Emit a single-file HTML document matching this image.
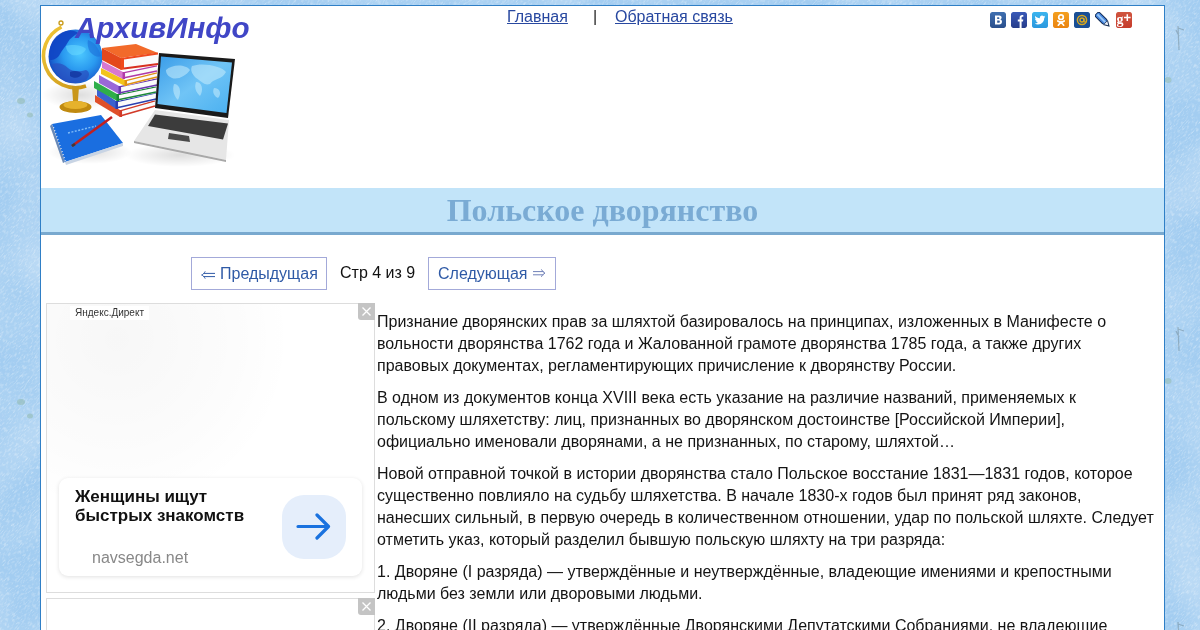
<!DOCTYPE html>
<html><head><meta charset="utf-8">
<style>
*{margin:0;padding:0;box-sizing:border-box}
html,body{width:1200px;height:630px;overflow:hidden}
body{background:#a3cdf1;font-family:"Liberation Sans",sans-serif;font-size:16px;color:#222;position:relative}
.abs{position:absolute}
#wrap{will-change:transform;position:absolute;left:40px;top:5px;width:1125px;height:700px;background:#fff;border:1px solid #2f7fc6}
#logo{position:absolute;left:0;top:0;width:200px;height:165px}
#logotitle{will-change:transform;position:absolute;left:75px;top:11px;font:italic bold 29.6px "Liberation Sans",sans-serif;color:#4046c6;white-space:nowrap}
.nav{position:absolute;top:2px;color:#2848a0;text-decoration:underline;white-space:nowrap}
#soc{position:absolute;left:949px;top:6px}
.ic{position:absolute;top:0;width:16px;height:16px;border-radius:2px}
#band{position:absolute;left:0;top:182px;width:1123px;height:47px;background:#c2e4f9;border-bottom:3px solid #79a9cf}
#band h1{position:absolute;left:0;right:0;top:4px;text-align:center;font:bold 32px "Liberation Serif",serif;color:#7aabd4}
.pbtn{position:absolute;top:251px;height:33px;border:1px solid #a3a9d9;color:#2f5aa6;line-height:31px;white-space:nowrap}
#pinfo{position:absolute;left:299px;top:251px;line-height:31px;color:#111}
.ad{position:absolute;left:5px;width:329px;border:1px solid #ddd;background:#fff}
.x{position:absolute;right:-1px;top:-1px;width:17px;height:17px;background:#c4c4c4;border-bottom-left-radius:3px}
.x svg{display:block}
.glow{position:absolute;left:0;top:0;width:327px;height:288px;background:radial-gradient(circle 175px at 70px 35px,rgba(0,0,0,0.03),rgba(0,0,0,0.012) 70%,rgba(0,0,0,0) 100%)}
.ylab{position:absolute;left:23px;top:2px;padding:0 5px;background:#fff;font-size:10px;line-height:14px;color:#333}
.card{position:absolute;left:12px;top:174px;width:303px;height:98px;background:#fff;border-radius:9px;box-shadow:0 1px 4px rgba(0,0,0,0.12)}
.ctitle{position:absolute;left:16px;top:9px;font-weight:bold;font-size:17px;line-height:19px;color:#111}
.cdom{position:absolute;left:33px;top:71px;font-size:16px;line-height:18px;color:#888}
.cbtn{position:absolute;left:223px;top:17px;width:64px;height:64px;background:#e5eefb;border-radius:22px}
.cbtn svg{display:block}
#txt{position:absolute;left:336px;top:305px;width:779px;color:#141414;line-height:22px}
#txt p{margin-bottom:10px}
</style></head><body>
<svg class="abs" style="left:0;top:0" width="1200" height="630">
<defs><filter id="nz" x="0" y="0" width="100%" height="100%"><feTurbulence type="fractalNoise" baseFrequency="0.9 0.25" numOctaves="2" seed="3"/><feColorMatrix type="matrix" values="0 0 0 0 1  0 0 0 0 1  0 0 0 0 1  0 0 0 1.6 -0.75"/></filter>
<filter id="nz2" x="0" y="0" width="100%" height="100%"><feTurbulence type="fractalNoise" baseFrequency="0.012" numOctaves="2" seed="7"/><feColorMatrix type="matrix" values="0 0 0 0 1  0 0 0 0 1  0 0 0 0 1  0 0 0 1.2 -0.45"/></filter></defs>
<rect width="1200" height="630" filter="url(#nz2)" opacity="0.5"/>
<g transform="rotate(40 600 315)"><rect x="-400" y="-600" width="2000" height="1830" filter="url(#nz)" opacity="0.65"/></g>
<g fill="#90b8a8" opacity="0.5"><ellipse cx="21" cy="101" rx="4" ry="3"/><ellipse cx="30" cy="115" rx="3" ry="2.5"/><ellipse cx="21" cy="402" rx="4" ry="3"/><ellipse cx="30" cy="416" rx="3" ry="2.5"/>
<ellipse cx="1168" cy="80" rx="3.5" ry="3"/><ellipse cx="1168" cy="381" rx="3.5" ry="3"/></g>
<g stroke="#6f8894" stroke-width="1.2" fill="none" opacity="0.5"><path d="M1178 26 L1179 50 M1178 28 L1184 30 M1179 36 L1176 30"/><path d="M1178 327 L1179 351 M1178 329 L1184 331 M1179 337 L1176 331"/><path d="M1178 622 L1179 640 M1178 624 L1184 626"/></g>
</svg>
<div id="wrap">

  <a class="nav" style="left:466px">Главная</a>
  <span class="nav" style="left:552px;text-decoration:none;color:#222">|</span>
  <a class="nav" style="left:574px">Обратная связь</a>
  <div id="soc">
    <svg class="ic" style="left:0" width="16" height="16" viewBox="0 0 16 16"><defs><linearGradient id="vk" x1="0" y1="0" x2="0" y2="1"><stop offset="0" stop-color="#3f6fb0"/><stop offset="1" stop-color="#2a4f8c"/></linearGradient></defs><rect width="16" height="16" rx="2" fill="url(#vk)"/><path d="M5 3.5 H9.2 C11 3.5 11.6 4.5 11.6 5.6 C11.6 6.6 11 7.2 10.4 7.5 C11.4 7.8 12 8.6 12 9.7 C12 11.3 11 12.5 9.2 12.5 H5 Z M7.2 5.3 V7 H8.6 C9.1 7 9.4 6.7 9.4 6.15 C9.4 5.6 9.1 5.3 8.6 5.3 Z M7.2 8.6 V10.7 H8.8 C9.4 10.7 9.8 10.3 9.8 9.65 C9.8 9 9.4 8.6 8.8 8.6 Z" fill="#fff"/></svg>
    <svg class="ic" style="left:21px" width="16" height="16" viewBox="0 0 16 16"><defs><linearGradient id="fb" x1="0" y1="0" x2="0" y2="1"><stop offset="0" stop-color="#3a5ab8"/><stop offset="1" stop-color="#263c8a"/></linearGradient></defs><rect width="16" height="16" rx="2" fill="url(#fb)"/><path d="M8.6 16 V9.6 H6.8 V7.6 H8.6 V5.8 C8.6 4 9.6 3 11.3 3 C11.9 3 12.3 3.05 12.3 3.05 V4.8 H11.5 C10.8 4.8 10.6 5.2 10.6 5.8 V7.6 H12.3 L12 9.6 H10.6 V16 Z" fill="#fff"/></svg>
    <svg class="ic" style="left:42px" width="16" height="16" viewBox="0 0 16 16"><defs><linearGradient id="tw" x1="0" y1="0" x2="0" y2="1"><stop offset="0" stop-color="#3cb4ee"/><stop offset="1" stop-color="#2a98de"/></linearGradient></defs><rect width="16" height="16" rx="1.5" fill="url(#tw)"/><path d="M13.2 4.6 C12.8 4.8 12.4 4.9 12 4.95 C12.4 4.7 12.8 4.3 12.9 3.8 C12.5 4 12 4.2 11.6 4.3 C11.2 3.9 10.6 3.6 10 3.6 C8.8 3.6 7.8 4.6 7.8 5.8 C7.8 6 7.8 6.15 7.85 6.3 C6 6.2 4.4 5.3 3.3 4 C3.1 4.3 3 4.7 3 5.1 C3 5.9 3.4 6.5 4 6.9 C3.6 6.9 3.3 6.8 3 6.6 C3 7.7 3.8 8.6 4.8 8.8 C4.5 8.9 4.1 8.9 3.8 8.85 C4.1 9.7 4.9 10.4 5.9 10.4 C5.1 11 4.1 11.4 3.1 11.4 C2.9 11.4 2.8 11.4 2.6 11.4 C3.6 12 4.8 12.4 6 12.4 C10 12.4 12.2 9.1 12.2 6.2 V5.9 C12.6 5.6 13 5.2 13.2 4.6 Z" fill="#fff"/></svg>
    <svg class="ic" style="left:63px" width="16" height="16" viewBox="0 0 16 16"><defs><linearGradient id="ok" x1="0" y1="0" x2="0" y2="1"><stop offset="0" stop-color="#f4a020"/><stop offset="1" stop-color="#ea8410"/></linearGradient></defs><rect width="16" height="16" rx="1.5" fill="url(#ok)"/><circle cx="8" cy="5.2" r="2.3" fill="none" stroke="#fff" stroke-width="1.7"/><path d="M4.8 9 C6.8 10.3 9.2 10.3 11.2 9" fill="none" stroke="#fff" stroke-width="1.7" stroke-linecap="round"/><path d="M8 10 L5.3 13.2 M8 10 L10.7 13.2" stroke="#fff" stroke-width="1.7" stroke-linecap="round"/></svg>
    <svg class="ic" style="left:84px" width="16" height="16" viewBox="0 0 16 16"><rect width="16" height="16" rx="1.5" fill="#1a4f95"/><circle cx="8" cy="8" r="4.6" fill="none" stroke="#d8a820" stroke-width="1.5"/><circle cx="8" cy="8" r="2" fill="#1a4f95" stroke="#d8a820" stroke-width="1.4"/><path d="M10 6.5 V9.2 C10 10.4 11.6 10.6 12.3 9.5" fill="none" stroke="#d8a820" stroke-width="1.2"/></svg>
    <svg class="ic" style="left:105px" width="16" height="16" viewBox="0 0 16 16"><g transform="rotate(-45 8 8)"><rect x="4.6" y="-1.5" width="6.8" height="13.5" rx="2.2" fill="#132c54"/><rect x="5.6" y="-0.6" width="4.8" height="12" rx="1.2" fill="#4a88e0"/><rect x="7.2" y="0" width="1.8" height="11" fill="#9ccaf6"/><path d="M4.6 11.5 L11.4 11.5 L8 17.5 Z" fill="#132c54"/><path d="M5.8 11.8 L10.2 11.8 L8 15.4 Z" fill="#eef2fa"/></g></svg>
    <svg class="ic" style="left:126px" width="16" height="16" viewBox="0 0 16 16"><defs><linearGradient id="gp" x1="0" y1="0" x2="0" y2="1"><stop offset="0" stop-color="#d05640"/><stop offset="1" stop-color="#c63a2a"/></linearGradient></defs><rect width="16" height="16" rx="1.5" fill="url(#gp)"/><text x="0.6" y="11.8" font-family="Liberation Serif" font-size="14" font-weight="bold" fill="#fff">g</text><path d="M11.3 2.3 V9 M8 5.6 H14.6" stroke="#fff" stroke-width="1.5"/></svg>
  </div>
  <div id="band"><h1>Польское дворянство</h1></div>
  <div class="pbtn" style="left:150px;width:136px"><svg class="abs" style="left:9px;top:13px" width="15" height="9" viewBox="0 0 15 9"><path d="M14 2.4 H2.5 M14 5.6 H2.5 M4.2 0.4 C3.4 2 2.2 3.4 0.6 4 C2.2 4.6 3.4 6 4.2 7.6" fill="none" stroke="#2f5aa6" stroke-width="1"/></svg><span class="abs" style="left:28px;top:0">Предыдущая</span></div>
  <div id="pinfo">Стр 4 из 9</div>
  <div class="pbtn" style="left:387px;width:128px"><span class="abs" style="left:9px;top:0">Следующая</span><svg class="abs" style="left:104px;top:11px" width="13" height="9" viewBox="0 0 13 9"><path d="M0 2.6 H10.5 M0 5.8 H10.5 M8.4 0.4 C9.2 2 10.4 3.4 12 4.2 C10.4 4.8 9.2 6.2 8.4 7.8" fill="none" stroke="#7080b8" stroke-width="1"/></svg></div>

  <div class="ad" style="top:297px;height:290px">
    <div class="glow"></div>
    <div class="ylab">Яндекс.Директ</div>
    <div class="card">
      <div class="ctitle">Женщины ищут<br>быстрых знакомств</div>
      <div class="cdom">navsegda.net</div>
      <div class="cbtn"><svg width="64" height="64" viewBox="0 0 64 64"><path d="M16 31.5 H46 M35 20 L46.5 31.5 L35 43" fill="none" stroke="#1a72df" stroke-width="3.2" stroke-linecap="round" stroke-linejoin="round"/></svg></div>
    </div>
    <div class="x"><svg width="17" height="17" viewBox="0 0 17 17"><path d="M4.5 4.5 L12.5 12.5 M12.5 4.5 L4.5 12.5" stroke="#fff" stroke-width="1.3"/></svg></div>
  </div>
  <div class="ad" style="top:592px;height:100px">
    <div class="x"><svg width="17" height="17" viewBox="0 0 17 17"><path d="M4.5 4.5 L12.5 12.5 M12.5 4.5 L4.5 12.5" stroke="#fff" stroke-width="1.3"/></svg></div>
  </div>

  <div id="txt">
    <p>Признание дворянских прав за шляхтой базировалось на принципах, изложенных в Манифесте о вольности дворянства 1762 года и Жалованной грамоте дворянства 1785 года, а также других правовых документах, регламентирующих причисление к дворянству России.</p>
    <p>В одном из документов конца XVIII века есть указание на различие названий, применяемых к польскому шляхетству: лиц, признанных во дворянском достоинстве [Российской Империи], официально именовали дворянами, а не признанных, по старому, шляхтой…</p>
    <p>Новой отправной точкой в истории дворянства стало Польское восстание 1831—1831 годов, которое существенно повлияло на судьбу шляхетства. В начале 1830-х годов был принят ряд законов, нанесших сильный, в первую очередь в количественном отношении, удар по польской шляхте. Следует отметить указ, который разделил бывшую польскую шляхту на три разряда:</p>
    <p>1. Дворяне (I разряда) — утверждённые и неутверждённые, владеющие имениями и крепостными людьми без земли или дворовыми людьми.</p>
    <p>2. Дворяне (II разряда) — утверждённые Дворянскими Депутатскими Собраниями, не владеющие</p>
  </div>
</div>
<svg id="logosvg" class="abs" style="left:0;top:0" width="250" height="175" viewBox="0 0 250 175">
<defs>
<radialGradient id="gl" cx="0.58" cy="0.45" r="0.62"><stop offset="0" stop-color="#4cc8ff"/><stop offset="0.5" stop-color="#2a9af0"/><stop offset="0.85" stop-color="#1a62d0"/><stop offset="1" stop-color="#1040b8"/></radialGradient>
<linearGradient id="scr" x1="0" y1="0" x2="1" y2="1"><stop offset="0" stop-color="#3a9ce8"/><stop offset="0.5" stop-color="#70c4f6"/><stop offset="1" stop-color="#4ab0f0"/></linearGradient>
<linearGradient id="gold" x1="0" y1="0" x2="1" y2="1"><stop offset="0" stop-color="#f2c838"/><stop offset="1" stop-color="#c89418"/></linearGradient>
<radialGradient id="sh" cx="0.5" cy="0.5" r="0.5"><stop offset="0" stop-color="#000" stop-opacity="0.13"/><stop offset="1" stop-color="#000" stop-opacity="0"/></radialGradient>
</defs>
<ellipse cx="80" cy="95" rx="38" ry="14" fill="url(#sh)"/>
<ellipse cx="90" cy="152" rx="42" ry="12" fill="url(#sh)"/>
<ellipse cx="180" cy="155" rx="55" ry="12" fill="url(#sh)"/>
<path d="M61.5 27 A32 32 0 0 0 86 86" fill="none" stroke="url(#gold)" stroke-width="3.6"/>
<circle cx="61" cy="23" r="2" fill="none" stroke="#c89a18" stroke-width="1.3"/>
<path d="M72 86 L79 86 L78 101 L73 101 Z" fill="#c9961a"/>
<ellipse cx="75.5" cy="107" rx="16" ry="6" fill="#c08a10"/>
<ellipse cx="75.5" cy="105" rx="12" ry="4" fill="#e6b22c"/>
<circle cx="75.5" cy="56.5" r="27" fill="url(#gl)"/>
<path d="M49.5 52 C50 42 56 34 66 31 C72 30 76 31 78 33 C74 36 70 38 68 42 C66 46 62 50 60 54 C58 58 54 60 50 60 C49.6 57 49.4 55 49.5 52 Z" fill="#0f44c4" opacity="0.9"/>
<path d="M52 64 C58 62 64 64 68 68 C72 72 80 72 86 70 C90 72 90 76 86 80 C80 83 72 84 66 82 C60 78 55 72 52 64 Z" fill="#2a50c0" opacity="0.75"/>
<path d="M70 72 C74 70 80 71 82 74 C80 78 74 79 70 76 Z" fill="#10309a" opacity="0.7"/>
<path d="M66 46 C72 44 82 45 86 49 C84 54 78 56 72 55 C68 53 66 50 66 46 Z" fill="#6ad8ff" opacity="0.55"/>
<path d="M88 40 C94 42 99 48 101 56 C98 58 94 56 90 52 C88 48 87 44 88 40 Z" fill="#1c70d8" opacity="0.6"/>
<g id="books"><polygon points="95.0,95.0 120.0,110.0 120.0,117.0 95.0,102.0" fill="#e0502a"/>
<polygon points="120.0,110.0 155.0,100.0 155.0,107.0 120.0,117.0" fill="#fbfbfb"/>
<polyline points="120.0,116.0 155.0,106.0" fill="none" stroke="#d23a28" stroke-width="1.6"/>
<polyline points="120.0,110.8 155.0,100.8" fill="none" stroke="#d23a28" stroke-width="1.2"/>
<polyline points="120.8,110.0 120.8,117.0" fill="none" stroke="#d23a28" stroke-width="2.5"/>
<polygon points="97.0,88.0 116.0,101.0 116.0,109.0 97.0,96.0" fill="#3a62d0"/>
<polygon points="116.0,101.0 156.0,92.0 156.0,100.0 116.0,109.0" fill="#fbfbfb"/>
<polyline points="116.0,108.0 156.0,99.0" fill="none" stroke="#2a3fb0" stroke-width="1.6"/>
<polyline points="116.0,101.8 156.0,92.8" fill="none" stroke="#2a3fb0" stroke-width="1.2"/>
<polyline points="116.8,101.0 116.8,109.0" fill="none" stroke="#2a3fb0" stroke-width="2.5"/>
<polygon points="94.0,81.0 117.0,94.0 117.0,101.0 94.0,88.0" fill="#2fae4a"/>
<polygon points="117.0,94.0 156.0,86.0 156.0,93.0 117.0,101.0" fill="#fbfbfb"/>
<polyline points="117.0,100.0 156.0,92.0" fill="none" stroke="#1c8838" stroke-width="1.6"/>
<polyline points="117.0,94.8 156.0,86.8" fill="none" stroke="#1c8838" stroke-width="1.2"/>
<polyline points="117.8,94.0 117.8,101.0" fill="none" stroke="#1c8838" stroke-width="2.5"/>
<polygon points="99.0,75.0 119.0,86.0 119.0,94.0 99.0,83.0" fill="#9a68d8"/>
<polygon points="119.0,86.0 157.0,78.0 157.0,86.0 119.0,94.0" fill="#fbfbfb"/>
<polyline points="119.0,93.0 157.0,85.0" fill="none" stroke="#6a38b0" stroke-width="1.6"/>
<polyline points="119.0,86.8 157.0,78.8" fill="none" stroke="#6a38b0" stroke-width="1.2"/>
<polyline points="119.8,86.0 119.8,94.0" fill="none" stroke="#6a38b0" stroke-width="2.5"/>
<polygon points="101.0,68.0 125.0,80.0 125.0,86.0 101.0,74.0" fill="#f2c41c"/>
<polygon points="125.0,80.0 157.0,72.0 157.0,78.0 125.0,86.0" fill="#fbfbfb"/>
<polyline points="125.0,85.0 157.0,77.0" fill="none" stroke="#e09010" stroke-width="1.6"/>
<polyline points="125.0,80.8 157.0,72.8" fill="none" stroke="#e09010" stroke-width="1.2"/>
<polyline points="125.8,80.0 125.8,86.0" fill="none" stroke="#e09010" stroke-width="2.5"/>
<polygon points="102.0,61.0 123.0,72.0 123.0,79.0 102.0,68.0" fill="#d878d0"/>
<polygon points="123.0,72.0 157.0,65.0 157.0,72.0 123.0,79.0" fill="#fbfbfb"/>
<polyline points="123.0,78.0 157.0,71.0" fill="none" stroke="#b03aa8" stroke-width="1.6"/>
<polyline points="123.0,72.8 157.0,65.8" fill="none" stroke="#b03aa8" stroke-width="1.2"/>
<polyline points="123.8,72.0 123.8,79.0" fill="none" stroke="#b03aa8" stroke-width="2.5"/>
<polygon points="102.0,48.0 136.0,44.0 158.0,53.0 121.0,58.0" fill="#f26a2a"/>
<polygon points="102.0,48.0 121.0,58.0 121.0,70.0 102.0,60.0" fill="#e4481c"/>
<polygon points="124.0,57.5 158.0,53.0 158.0,65.0 124.0,69.5" fill="#fbfbfb"/>
<polygon points="121.0,58.0 124.0,57.5 124.0,69.5 121.0,70.0" fill="#f04a1a"/>
<polyline points="124.0,68.5 158.0,64.0" fill="none" stroke="#d83020" stroke-width="1.8"/>
<polyline points="124.0,58.5 158.0,53.5" fill="none" stroke="#ef4a20" stroke-width="1.8"/></g>
<path d="M134 141 L155 110 L229 120 L226 160 Z" fill="#e6e6e6"/>
<path d="M134 141 L226 160 L226 162 L134 143 Z" fill="#a8a8a8"/>
<path d="M148 126 L155 114.5 L228 123.5 L223 139.5 Z" fill="#3c3c3c"/>
<path d="M169 133 L189 136 L190 142 L168 139 Z" fill="#4a4a4a"/>
<path d="M159 53 L235 59 L228 118 L155 108 Z" fill="#1a1a1a"/>
<path d="M161 56.5 L232 62.5 L226.5 113 L157.5 104 Z" fill="url(#scr)"/>
<path d="M166 70 C172 64 186 64 190 70 C186 76 178 80 172 78 C168 76 166 74 166 70 Z M192 66 C202 62 222 66 226 72 C222 80 214 78 210 84 C204 86 200 80 196 78 C192 74 190 70 192 66 Z M174 84 C180 84 182 92 178 100 C174 96 172 90 174 84 Z M196 82 C202 82 204 90 200 96 C196 92 194 88 196 82 Z M214 88 C220 88 222 94 218 98 C214 96 212 92 214 88 Z" fill="#c8ecfc" opacity="0.55"/>
<path d="M52 124 L101 115 L123 143 L65 162 Z" fill="#1a6ee0"/>
<path d="M65 162 L123 143 L123 146 L66 165 Z" fill="#c8d4e4"/>
<path d="M52 124 L65 162 L63 163 L50 126 Z" fill="#6a8ab8"/>
<path d="M68 133 L96 126" stroke="#9ad0ff" stroke-width="1.4" stroke-dasharray="2 1.5" opacity="0.8"/><path d="M53.5 127 L65.5 161" stroke="#d8e4f4" stroke-width="1.2" stroke-dasharray="1 2.2"/>
<path d="M72 146 L112 117" stroke="#c02020" stroke-width="2.6"/>
<path d="M72 146 L75 144" stroke="#3a3a3a" stroke-width="2.6"/>
</svg>
<div id="logotitle">АрхивИнфо</div>
</body></html>
